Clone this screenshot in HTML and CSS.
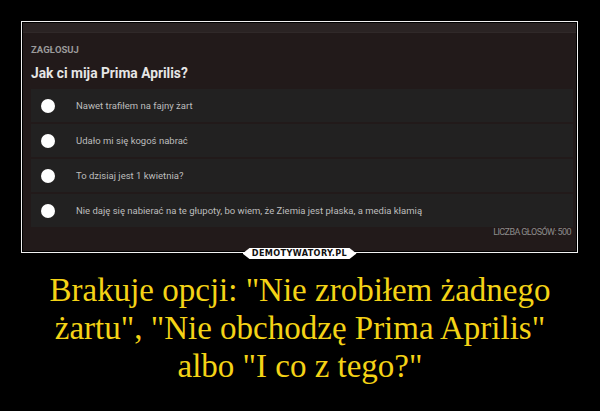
FILE: index.html
```html
<!DOCTYPE html>
<html lang="pl">
<head>
    <meta charset="UTF-8">
    <title>Jak ci mija Prima Aprilis? - Demotywatory</title>
    <link rel="stylesheet" href="styles.css">
</head>
<body>
    <div class="poster">
        <div class="frame">
            <div class="shot">
                <div class="topbar"></div>
                <div class="poll">
                    <div class="label">ZAGŁOSUJ</div>
                    <h2 class="question">Jak ci mija Prima Aprilis?</h2>
                    <div class="options">
                        <div class="option"><span class="dot"></span>Nawet trafiłem na fajny żart</div>
                        <div class="option"><span class="dot"></span>Udało mi się kogoś nabrać</div>
                        <div class="option"><span class="dot"></span>To dzisiaj jest 1 kwietnia?</div>
                        <div class="option"><span class="dot"></span>Nie daję się nabierać na te głupoty, bo wiem, że Ziemia jest płaska, a media kłamią</div>
                    </div>
                    <div class="votes">LICZBA GŁOSÓW: 500</div>
                </div>
            </div>
            <div class="logo">DEMOTYWATORY.PL</div>
        </div>
        <p class="caption">Brakuje opcji: "Nie zrobiłem żadnego żartu", "Nie obchodzę Prima Aprilis" albo "I co z tego?"</p>
    </div>
</body>
</html>
```

FILE: styles.css
```css
body {
    margin: 0;
    padding: 0;
    background-color: #000;
    font-family: Roboto, Arial, sans-serif;
}
.poster {
    width: 600px;
    height: 411px;
    padding-top: 21px;
    box-sizing: border-box;
    overflow: hidden;
}
.frame {
    position: relative;
    margin: 0 22px 0 21px;
    border: 1px solid #f2f2f2;
    padding: 1px;
    background-color: #000;
}
.shot {
    background-color: #221a1a;
    height: 228px;
}
.topbar {
    height: 9px;
    background-color: #2a2323;
    border-bottom: 1px solid #302929;
}
.poll {
    padding: 0 3px 0 8px;
}
.label {
    margin-top: 11px;
    font-size: 9.5px;
    font-weight: bold;
    color: #9b9b9b;
    line-height: 12px;
}
.question {
    margin: 9px 0 0;
    font-size: 13.75px;
    font-weight: bold;
    color: #e6e6e6;
    line-height: 16px;
}
.options {
    margin-top: 8px;
    display: flex;
    flex-direction: column;
    gap: 2px;
}
.option {
    height: 33px;
    display: flex;
    align-items: center;
    background-color: #222121;
    font-size: 9.5px;
    color: #bdbdbd;
}
.dot {
    width: 14px;
    height: 14px;
    border-radius: 50%;
    background-color: #fff;
    margin: 0 21px 0 10px;
    flex-shrink: 0;
}
.votes {
    margin-top: 0;
    text-align: right;
    font-size: 9px;
    letter-spacing: -0.6px;
    color: #8c8c8c;
    padding-right: 2px;
}
.logo {
    position: absolute;
    left: 50%;
    bottom: -7px;
    transform: translateX(-50%);
    width: 114px;
    height: 11px;
    background-color: #fff;
    clip-path: polygon(7px 0, 107px 0, 114px 50%, 107px 100%, 7px 100%, 0 50%);
    color: #111;
    font-family: "DejaVu Sans Condensed", "DejaVu Sans", sans-serif;
    font-weight: bold;
    font-size: 9px;
    line-height: 11px;
    letter-spacing: 0.4px;
    text-align: center;
}
.caption {
    margin: 18px 0 0;
    text-align: center;
    font-family: "Liberation Serif", "Times New Roman", serif;
    font-size: 33px;
    line-height: 38px;
    color: #f4d316;
    padding: 0 40px;
}
```
